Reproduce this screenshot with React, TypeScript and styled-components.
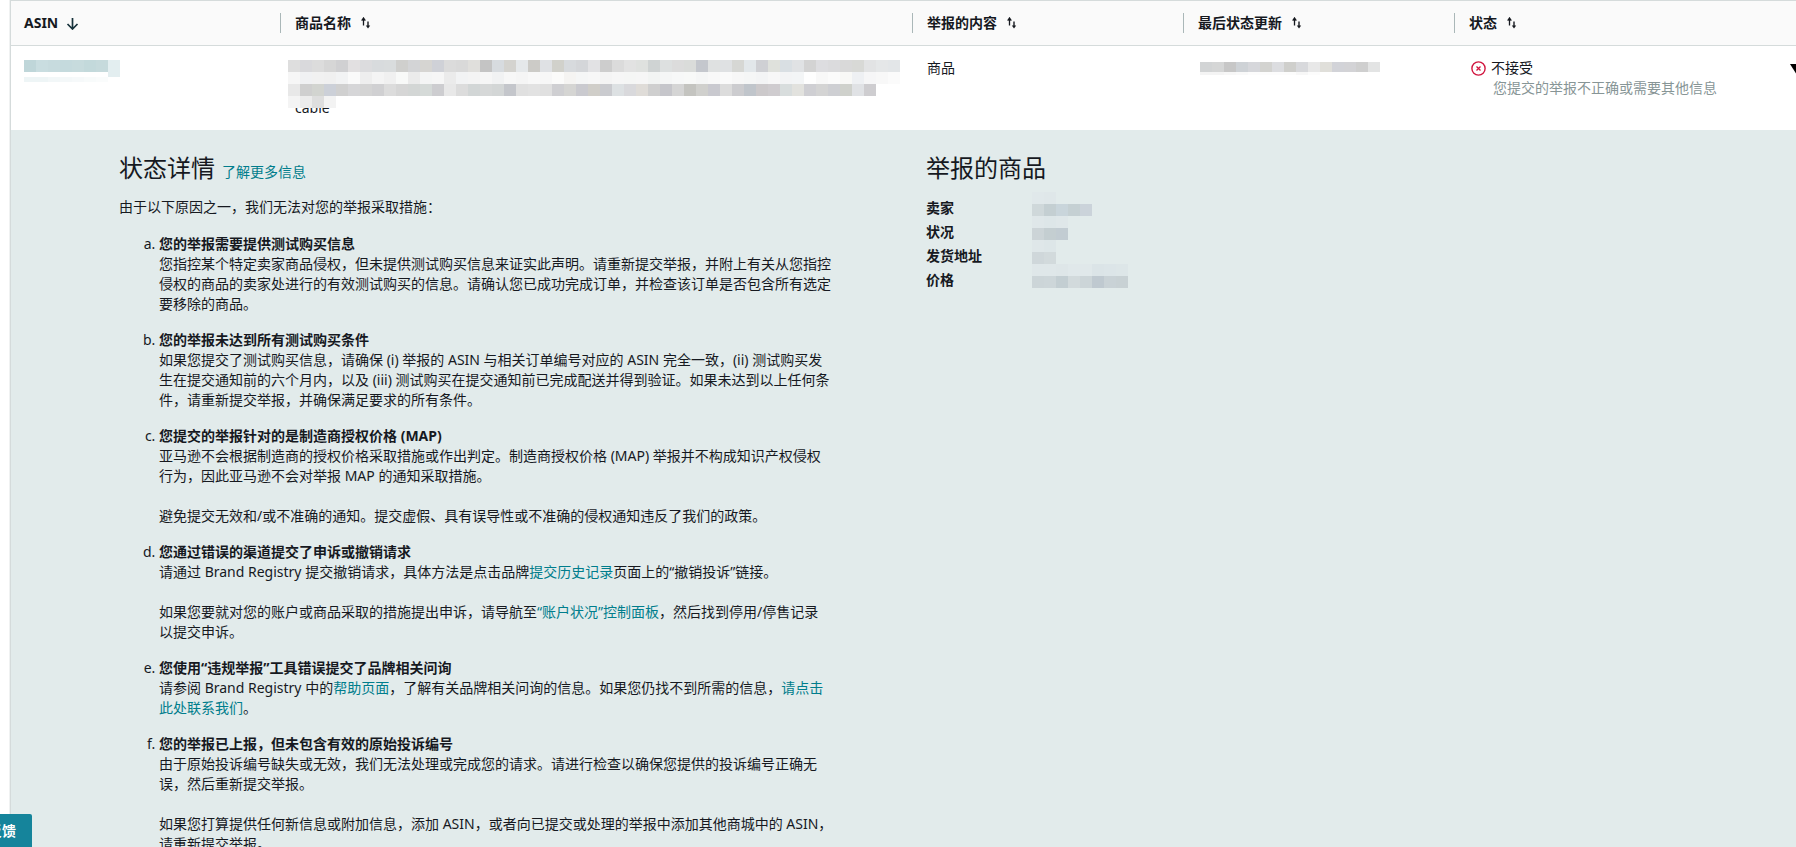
import styled, {createGlobalStyle} from 'styled-components';

const GlobalStyle = createGlobalStyle`
    html, body {
        margin: 0;
        height: 847px;
        overflow: hidden;
        background: #fff;
    }
    body {
        font-family: "Noto Sans", "Noto Sans CJK SC", sans-serif;
        font-size: 14px;
        line-height: 20px;
        color: #16191f;
    }
`;

const stripes = (cells: string[]) =>
    `linear-gradient(90deg, ${cells.map((c, i) => `${c} ${i * 12}px ${(i + 1) * 12}px`).join(', ')})`;

// one row of redaction squares, colours separated by spaces
const MosaicRow = styled.div<{$cells: string; $height?: number}>`
    height: ${props => props.$height ?? 12}px;
    width: ${props => props.$cells.split(' ').length * 12}px;
    background: ${props => stripes(props.$cells.split(' '))};
`;

const nameMosaic = [
    '#dedede #d9d9dc #dcdcdc #d6d6d6 #d0d0d2 #e2e0e1 #dcdcde #d8dbdd #d9dcdd #cfcfcd #d3d4d6 #d6d5d2 #cfd1d7 #dbdbdb #d9d9d9 #e0dfdc #c4c4c4 #d7dbdf #d4d3cf #e5e8ea #cccbc7 #dfe1e4 #d1d1cb #d7dadd #d4d6d9 #e2e2e4 #cdcdcd #dbdbdb #e2e2e2 #dfe1df #cfd3d3 #dde0e0 #dcdcdc #dadcda #c4c7cd #dfe1e1 #dfe1e3 #d6d7d4 #e2e7ea #cfd0d4 #dfe1dc #d9dfe3 #e0e2e4 #d3d3d3 #dddde0 #dbdbdd #d9d9d9 #d8d9d6 #e2e3e4 #e5e7e8 #e3e6e8',
    '#f6f6f6 #f0f1f3 #f1f1f1 #f0f0f0 #f2f3f4 #fafafa #eeeeee #f4f4f4 #f0f0f0 #f8f9f8 #ebebeb #f4f5f5 #f6f6f6 #ebebeb #f2f3f4 #f4f4f4 #f6f6f6 #f1f2f3 #f7f7f7 #f5f5f5 #f8f8f8 #f7f7f7 #fbfbfa #f5f4f2 #f5f6f6 #f7f7f7 #f4f4f4 #f6f6f6 #f5f6f5 #f6f6f6 #f2f4f3 #f5f6f6 #f7f8f8 #f8f9f8 #f5f6f6 #f8f8f8 #fafafa #f7f7f7 #f5f6f6 #f3f4f5 #f7f7f7 #f3f4f5 #f3f5f6 #fefefe #f8f8f8 #fbfbfb #f8f8f6 #eef0f3 #f6f6f7 #f8f8f8 #fbfbfb',
    '#e8e8e8 #cfcfcf #d2d4d0 #ccd0d8 #d0d0d0 #d6d6d8 #d4d4d4 #d0d0d2 #dcdcdc #d6d6d6 #d3d6d5 #d5dad8 #cdcdd0 #e8e8e8 #dcdcdc #d2d6d6 #d6d8d8 #d3d6d6 #c4c6cb #e0e0e0 #e2e2e2 #e0e0e0 #cfcfd2 #d5d5d3 #cacacf #d0cec9 #cacbcf #dde1e3 #d9d9dc #dfdcd8 #cfcfcf #c6c6cb #d5d5d5 #c4c4c0 #d0d0cd #c9c9cf #dcdcdc #cccccf #c0c5cb #ccc9cb #cfcccf #d8dddd #e2e2de #cfcfd3 #d4d4d4 #cecfd3 #cfd1cc #e0e2e5 #cecdd0',
    '#f4f4f4 #ececec #dedede #f3f3f3',
];

const dateMosaic = '#d2d4d5 #d5d6d6 #c7c7c7 #ced2d6 #d6d7db #d3d3d0 #dcdde0 #cfcfcc #d8d9dc #e8e8e8 #e0dfda #d2d3d8 #d3d3d6 #cfcfcf #e3e4e4';
const dateMosaicFaint = '#f4f4f4 #f4f4f4 #f7f7f7 #f9f9f9 #fcfcfc #fcfcfc #fcfcfc #fcfcfc #f7f7f7 #fcfcfc';

const specMosaic = [
    '#e0e8ea #dfe7e9',
    '#cfd8da #c4cfd2 #c9d5db #c5d0d3 #cbd3da',
    '#dfe7e9 #dde6e8 #dfe7e9',
    '#ccd4d7 #c4ced1 #c2ccd2',
    '#dfe7e9 #dde6e8',
    '#cfd7da #d2dadc',
    '#dfe7e9 #dfe7e9 #dee6e8 #e0e8ea #e0e8ea #dbe4e7 #dce5e8 #dde6e8',
    '#ccd5d8 #cdd6d9 #c3ced2 #d2dadc #ccd5d8 #bfc9d0 #c9d2d6 #c8d1d4',
];

const columns = '269px 632px 271px 271px 1fr';

const Page = styled.div`
    padding-left: 10px;
`;

const Card = styled.div`
    border-left: 1px solid #d5dbdb;
    border-top: 1px solid #d5dbdb;
    box-shadow: -1px 0 0 #f0f2f2;
`;

const HeaderRow = styled.div`
    display: grid;
    grid-template-columns: ${columns};
    align-items: center;
    height: 44px;
    background: #fafafa;
    border-bottom: 1px solid #d5dbdb;
`;

const HeaderCell = styled.div<{$first?: boolean}>`
    display: flex;
    align-items: center;
    gap: ${props => props.$first ? 8 : 10}px;
    height: 20px;
    padding-left: ${props => props.$first ? 13 : 14}px;
    border-left: ${props => props.$first ? 'none' : '1px solid #aab7b8'};
    font-weight: 700;
`;

const BodyRow = styled.div`
    position: relative;
    display: grid;
    grid-template-columns: ${columns};
    height: 84px;
    background: #fff;
`;

const Cell = styled.div`
    position: relative;
    padding: 12px 14px 0 15px;
`;

const AsinCell = styled(Cell)`
    padding: 14px 0 0 13px;
`;

const AsinMosaic = styled.div`
    display: flex;
`;

const AsinTail = styled(MosaicRow)`
    height: 17px;
`;

const NameMosaic = styled.div`
    position: absolute;
    left: 8px;
    top: 14px;
`;

const NameTail = styled.div`
    margin-top: 40px;
`;

const DateCell = styled(Cell)`
    padding: 16px 0 0 17px;
`;

const StatusLine = styled.div`
    display: flex;
    align-items: center;
    gap: 5px;
    padding-left: 2px;
`;

const StatusNote = styled.div`
    padding-left: 24px;
    color: #879596;
`;

const Caret = styled.div`
    position: absolute;
    right: -8px;
    top: 18px;
    width: 0;
    height: 0;
    border-left: 7px solid transparent;
    border-right: 7px solid transparent;
    border-top: 11px solid #000;
`;

const Details = styled.div`
    display: grid;
    grid-template-columns: 807px 1fr;
    height: 717px;
    padding: 22px 0 0 108px;
    background: #e2ebeb;
`;

const Title = styled.h2`
    height: 32px;
    margin: 0;
    font-size: 24px;
    line-height: 32px;
    font-weight: 400;
`;

const Link = styled.a`
    color: #007d8c;
    text-decoration: none;
`;

const TitleLink = styled(Link)`
    margin-left: 7px;
    font-size: 14px;
`;

const Intro = styled.p`
    margin: 13px 0 17px;
`;

const ReasonList = styled.ol`
    list-style-type: lower-alpha;
    margin: 0;
    padding: 0 0 0 40px;
    width: 674px;
`;

const Reason = styled.li`
    margin-bottom: 16px;
`;

const ReasonTitle = styled.strong`
    display: block;
    font-weight: 700;
`;

const Specs = styled.div`
    display: flex;
    margin-top: 12px;
`;

const SpecLabels = styled.div`
    width: 106px;
    line-height: 24px;
    font-weight: 700;
`;

const SpecMosaic = styled.div`
    margin-top: -4px;
`;

const FeedbackButton = styled.div`
    position: fixed;
    left: -12px;
    bottom: 0;
    width: 44px;
    height: 33px;
    border-radius: 0 2px 0 0;
    background: #15849b;
    color: #fff;
    font-weight: 700;
    line-height: 33px;
`;

function SortIcon() {
    return (
        <svg width="10" height="12" viewBox="0 0 10 12" fill="none">
            <path d="M2.5 8.5V1.5M.7 3.6 2.5 1l1.8 2.6" stroke="#16191f" strokeWidth="1.3" />
            <path d="M7 4.5V10" stroke="#16191f" strokeWidth="1.4" />
            <path d="M4.8 8.6h4.4L7 11.6z" fill="#16191f" />
        </svg>
    );
}

function SortedIcon() {
    return (
        <svg width="13" height="13" viewBox="0 0 13 13" fill="none">
            <path d="M6.5 1V12M1.5 7l5 5 5-5" stroke="#16313a" strokeWidth="1.7" />
        </svg>
    );
}

function RejectedIcon() {
    return (
        <svg width="15" height="15" viewBox="0 0 15 15" fill="none">
            <circle cx="7.5" cy="7.5" r="6.6" stroke="#d1163f" strokeWidth="1.4" />
            <path d="M5.5 5.5l4 4M9.5 5.5l-4 4" stroke="#d1163f" strokeWidth="1.3" />
        </svg>
    );
}

const headers = ['商品名称', '举报的内容', '最后状态更新', '状态'];

export default function App() {
    return (
        <Page lang="zh-CN">
            <GlobalStyle />
            <Card>
                <HeaderRow>
                    <HeaderCell $first>ASIN <SortedIcon /></HeaderCell>
                    {headers.map(h => <HeaderCell key={h}>{h} <SortIcon /></HeaderCell>)}
                </HeaderRow>
                <BodyRow>
                    <AsinCell>
                        <AsinMosaic>
                            <MosaicRow $cells="#bfd6d9 #c9dde0 #c7dbde #c5dadd #c7dbdd #c3d9db #c6dadc" />
                            <AsinTail $cells="#e3eef0" />
                        </AsinMosaic>
                        <MosaicRow $height={5} $cells="#eef5f6 #eef5f6 #f2f7f8 #f4f8f9 #f6f9fa #f8fbfb #fafcfc" />
                    </AsinCell>
                    <Cell>
                        <NameTail>cable</NameTail>
                        <NameMosaic>
                            {nameMosaic.map(cells => <MosaicRow key={cells} $cells={cells} />)}
                        </NameMosaic>
                    </Cell>
                    <Cell>商品</Cell>
                    <DateCell>
                        <MosaicRow $height={10} $cells={dateMosaic} />
                        <MosaicRow $height={3} $cells={dateMosaicFaint} />
                    </DateCell>
                    <Cell>
                        <StatusLine><RejectedIcon />不接受</StatusLine>
                        <StatusNote>您提交的举报不正确或需要其他信息</StatusNote>
                    </Cell>
                    <Caret />
                </BodyRow>
                <Details>
                    <div>
                        <Title>状态详情<TitleLink>了解更多信息</TitleLink></Title>
                        <Intro>由于以下原因之一，我们无法对您的举报采取措施：</Intro>
                        <ReasonList>
                            <Reason>
                                <ReasonTitle>您的举报需要提供测试购买信息</ReasonTitle>
                                您指控某个特定卖家商品侵权，但未提供测试购买信息来证实此声明。请重新提交举报，并附上有关从您指控侵权的商品的卖家处进行的有效测试购买的信息。请确认您已成功完成订单，并检查该订单是否包含所有选定要移除的商品。
                            </Reason>
                            <Reason>
                                <ReasonTitle>您的举报未达到所有测试购买条件</ReasonTitle>
                                如果您提交了测试购买信息，请确保 (i) 举报的 ASIN 与相关订单编号对应的 ASIN 完全一致，(ii) 测试购买发生在提交通知前的六个月内，以及 (iii) 测试购买在提交通知前已完成配送并得到验证。如果未达到以上任何条件，请重新提交举报，并确保满足要求的所有条件。
                            </Reason>
                            <Reason>
                                <ReasonTitle>您提交的举报针对的是制造商授权价格 (MAP)</ReasonTitle>
                                亚马逊不会根据制造商的授权价格采取措施或作出判定。制造商授权价格 (MAP) 举报并不构成知识产权侵权行为，因此亚马逊不会对举报 MAP 的通知采取措施。
                                <br /><br />
                                避免提交无效和/或不准确的通知。提交虚假、具有误导性或不准确的侵权通知违反了我们的政策。
                            </Reason>
                            <Reason>
                                <ReasonTitle>您通过错误的渠道提交了申诉或撤销请求</ReasonTitle>
                                请通过 Brand Registry 提交撤销请求，具体方法是点击品牌<Link>提交历史记录</Link>页面上的“撤销投诉”链接。
                                <br /><br />
                                如果您要就对您的账户或商品采取的措施提出申诉，请导航至<Link>“账户状况”控制面板</Link>，然后找到停用/停售记录<br />以提交申诉。
                            </Reason>
                            <Reason>
                                <ReasonTitle>您使用“违规举报”工具错误提交了品牌相关问询</ReasonTitle>
                                请参阅 Brand Registry 中的<Link>帮助页面</Link>，了解有关品牌相关问询的信息。如果您仍找不到所需的信息，<Link>请点击<br />此处联系我们</Link>。
                            </Reason>
                            <Reason>
                                <ReasonTitle>您的举报已上报，但未包含有效的原始投诉编号</ReasonTitle>
                                由于原始投诉编号缺失或无效，我们无法处理或完成您的请求。请进行检查以确保您提供的投诉编号正确无误，然后重新提交举报。
                                <br /><br />
                                如果您打算提供任何新信息或附加信息，添加 ASIN，或者向已提交或处理的举报中添加其他商城中的 ASIN，请重新提交举报。
                            </Reason>
                        </ReasonList>
                    </div>
                    <div>
                        <Title>举报的商品</Title>
                        <Specs>
                            <SpecLabels>
                                <div>卖家</div>
                                <div>状况</div>
                                <div>发货地址</div>
                                <div>价格</div>
                            </SpecLabels>
                            <SpecMosaic>
                                {specMosaic.map(cells => <MosaicRow key={cells} $cells={cells} />)}
                            </SpecMosaic>
                        </Specs>
                    </div>
                </Details>
            </Card>
            <FeedbackButton>反馈</FeedbackButton>
        </Page>
    );
}
